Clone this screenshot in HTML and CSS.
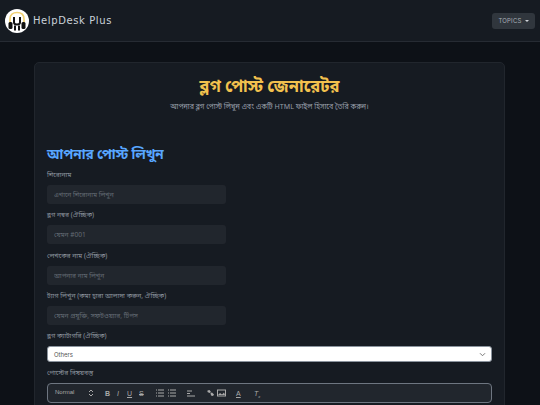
FILE: index.html
```html
<!DOCTYPE html>
<html lang="bn">
<head>
    <meta charset="UTF-8">
    <title>HelpDesk Plus - Blog Post Generator</title>
    <link rel="stylesheet" href="styles.css">
</head>
<body>
    <header class="site-header">
        <a class="brand" href="#">
            <svg class="brand-logo" width="24" height="24" viewBox="0 0 24 24" xmlns="http://www.w3.org/2000/svg">
                <circle cx="12" cy="12" r="12" fill="#fff"/>
                <path d="M5 14V10C5 5.500 8 3.500 12 3.500C16 3.500 19 5.500 19 10V14" fill="none" stroke="#f0d070" stroke-width="1.600"/>
                <path d="M9 8V13.500C9 15 10 15.500 12 15.500C14 15.500 15 15 15 13.500V8" fill="none" stroke="#111" stroke-width="2"/>
                <rect x="3.500" y="13" width="4" height="7" rx="1.500" fill="#111"/>
                <rect x="16.500" y="13" width="4" height="7" rx="1.500" fill="#111"/>
                <rect x="9" y="16.500" width="2" height="5" fill="#111"/>
                <rect x="13" y="16.500" width="2" height="5" fill="#111"/>
            </svg>
            <span class="brand-name">HelpDesk Plus</span>
        </a>
        <button class="topics-button">TOPICS <span class="caret"></span></button>
    </header>

    <main class="page">
        <section class="card">
            <h1 class="page-title">ব্লগ পোস্ট জেনারেটর</h1>
            <p class="page-subtitle">আপনার ব্লগ পোস্ট লিখুন এবং একটি HTML ফাইল হিসাবে তৈরি করুন।</p>

            <h2 class="section-title">আপনার পোস্ট লিখুন</h2>

            <form class="post-form">
                <div class="field">
                    <label class="field-label">শিরোনাম</label>
                    <input class="text-input" type="text" placeholder="এখানে শিরোনাম লিখুন">
                </div>
                <div class="field">
                    <label class="field-label">ব্লগ নম্বর (ঐচ্ছিক)</label>
                    <input class="text-input" type="text" placeholder="যেমন #001">
                </div>
                <div class="field">
                    <label class="field-label">লেখকের নাম (ঐচ্ছিক)</label>
                    <input class="text-input" type="text" placeholder="আপনার নাম লিখুন">
                </div>
                <div class="field">
                    <label class="field-label">ট্যাগ লিখুন (কমা দ্বারা আলাদা করুন, ঐচ্ছিক)</label>
                    <input class="text-input" type="text" placeholder="যেমন প্রযুক্তি, সফটওয়্যার, টিপস">
                </div>
                <div class="field">
                    <label class="field-label">ব্লগ ক্যাটাগরি (ঐচ্ছিক)</label>
                    <div class="select-box">
                        <span>Others</span>
                        <svg width="7" height="5" viewBox="0 0 8 6" xmlns="http://www.w3.org/2000/svg">
                            <path d="M1 1.500L4 4.500L7 1.500" fill="none" stroke="#777" stroke-width="1.200"/>
                        </svg>
                    </div>
                </div>
                <div class="field">
                    <label class="field-label">পোস্টের বিষয়বস্তু</label>
                    <div class="editor-toolbar">
                        <span class="tool-normal">Normal</span>
                        <svg class="tool tool-arrows" width="6" height="8" viewBox="0 0 6 8"><path d="M1 3L3 1L5 3M1 5L3 7L5 5" fill="none" stroke="#aaa"/></svg>
                        <b class="tool tool-b">B</b>
                        <i class="tool tool-i">I</i>
                        <u class="tool tool-u">U</u>
                        <s class="tool tool-s">S</s>
                        <svg class="tool tool-list" width="8" height="8" viewBox="0 0 8 8"><path d="M0 1H1M2 1H8M0 4H1M2 4H8M0 7H1M2 7H8" stroke="#aaa"/></svg>
                        <svg class="tool tool-list" width="8" height="8" viewBox="0 0 8 8"><path d="M0 1H1M2 1H8M0 4H1M2 4H8M0 7H1M2 7H8" stroke="#aaa"/></svg>
                        <svg class="tool tool-align" width="8" height="8" viewBox="0 0 8 8"><path d="M0 2H5M0 4.500H3M0 7H8" stroke="#aaa"/></svg>
                        <svg class="tool tool-link" width="9" height="8" viewBox="0 0 9 8"><path d="M1.500 1.500L3.500 1L5 3L3.500 4L1.500 3ZM4.500 4L6 3.500L8 5.500L7 7L5 6.500Z" fill="#aaa"/></svg>
                        <svg class="tool tool-image" width="9" height="8" viewBox="0 0 9 8"><rect x="0.500" y="1" width="8" height="6" fill="none" stroke="#aaa"/><path d="M1 6L3 4L5 5.500L7 3.500L8 6Z" fill="#aaa"/></svg>
                        <span class="tool tool-color">A</span>
                        <span class="tool tool-clean">T<sub>x</sub></span>
                    </div>
                </div>
            </form>
        </section>
    </main>
</body>
</html>
```

FILE: styles.css
```css
html, body {
    height: 405px;
    overflow: hidden;
}

body {
    margin: 0;
    background-color: #0d1117;
    color: #c9d1d9;
    font-family: 'Noto Sans', 'Noto Sans Bengali', 'Inter', sans-serif;
}

.site-header {
    height: 42px;
    box-sizing: border-box;
    padding: 0 5px;
    display: flex;
    align-items: center;
    justify-content: space-between;
    background-color: #161b22;
    border-bottom: 1px solid #262b33;
}

.brand {
    display: flex;
    align-items: center;
    gap: 4px;
    text-decoration: none;
}

.brand-name {
    font-family: 'DejaVu Sans', sans-serif;
    font-size: 10px;
    letter-spacing: 0.6px;
    color: #c9d1d9;
}

.topics-button {
    width: 43px;
    height: 16px;
    padding: 0;
    display: flex;
    align-items: center;
    justify-content: center;
    gap: 3px;
    background-color: #30363d;
    border: none;
    border-radius: 3px;
    color: #a8aeb6;
    font-family: 'Inter', sans-serif;
    font-size: 6px;
    letter-spacing: 0.2px;
}

.caret {
    width: 0;
    height: 0;
    border-left: 2px solid transparent;
    border-right: 2px solid transparent;
    border-top: 2px solid #d0d4da;
}

.page {
    padding: 20px 35px 0 34px;
}

.card {
    box-sizing: border-box;
    min-height: 400px;
    padding: 10px 12px 0 12px;
    background-color: #161b22;
    border: 1px solid #21262d;
    border-radius: 5px;
}

.page-title {
    margin: 0;
    text-align: center;
    font-size: 16.500px;
    line-height: 25px;
    font-weight: 700;
    color: #f2c14e;
}

.page-subtitle {
    margin: 2px 0 0;
    text-align: center;
    font-size: 7.100px;
    line-height: 12px;
    color: #969ea8;
}

.section-title {
    margin: 32px 0 0;
    font-size: 13.500px;
    line-height: 20px;
    font-weight: 700;
    color: #58a6ff;
}

.post-form {
    margin-top: 5px;
}

.field {
    margin-bottom: 5.300px;
}

.field-label {
    display: block;
    height: 11px;
    line-height: 11px;
    margin-bottom: 5px;
    font-size: 6.700px;
    color: #8d959f;
}

.text-input {
    display: block;
    box-sizing: border-box;
    width: 179px;
    height: 19px;
    padding: 0 7px;
    background-color: #21262d;
    border: none;
    border-radius: 3px;
    font-family: inherit;
    font-size: 6.600px;
    color: #c9d1d9;
}

.text-input::placeholder {
    color: #636b74;
}

.select-box {
    height: 16px;
    box-sizing: border-box;
    padding: 0 5px 0 6px;
    display: flex;
    align-items: center;
    justify-content: space-between;
    background-color: #fff;
    border: 1px solid #8b949e;
    border-radius: 3px;
    font-family: 'Inter', sans-serif;
    font-size: 6px;
    color: #555;
}

.editor-toolbar {
    position: relative;
    height: 20px;
    box-sizing: border-box;
    background-color: #21262d;
    border: 1px solid #6e7681;
    border-radius: 4px;
    font-family: 'Liberation Sans', sans-serif;
    font-size: 7px;
    color: #aaa;
}

.tool-normal {
    position: absolute;
    left: 7px;
    top: 4px;
    font-size: 6px;
    line-height: 9px;
}

.tool {
    position: absolute;
    top: 5px;
    line-height: 9px;
}

.tool-arrows { left: 40px; }
.tool-b { left: 57px; }
.tool-i { left: 69px; }
.tool-u { left: 79px; }
.tool-s { left: 91px; }
.tool-list { left: 108px; }
.tool-list + .tool-list { left: 120px; }
.tool-align { left: 139px; }
.tool-link { left: 158px; }
.tool-image { left: 169px; }
.tool-color { left: 188px; text-decoration: underline; }
.tool-clean { left: 206px; font-style: italic; }
.tool-clean sub { font-size: 4px; }
```
